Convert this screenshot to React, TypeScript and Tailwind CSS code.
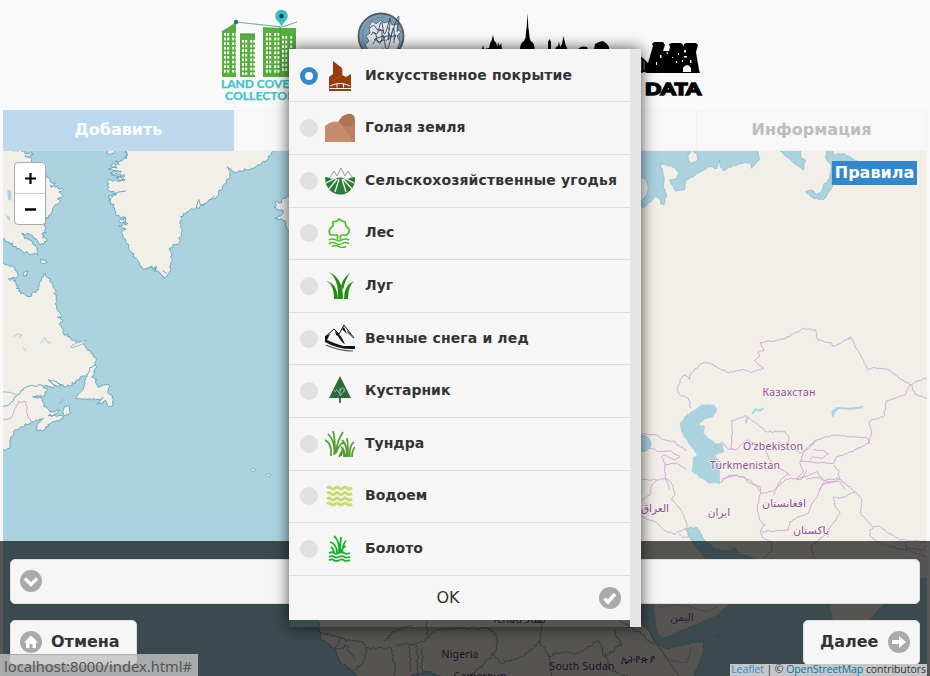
import React from 'react';

type Pt = [number, number];

const parse = (s: string): Pt[] =>
  s.trim().split(/\s+/).map((p) => p.split(',').map(Number) as Pt);

/** Builds a path through the points, roughening each segment by a repeatable amount. */
function rough(s: string, amount = 5, closed = true): string {
  const pts = parse(s);
  let seed = pts.length * 7919 + Math.abs(pts[0][0]) * 31;
  const rnd = () => {
    seed = (seed * 1103515245 + 12345) % 2147483648;
    return seed / 2147483648 - 0.5;
  };
  const out: string[] = [];
  const n = closed ? pts.length : pts.length - 1;
  for (let i = 0; i < n; i++) {
    const [x1, y1] = pts[i];
    const [x2, y2] = pts[(i + 1) % pts.length];
    out.push(`${x1},${y1}`);
    const len = Math.hypot(x2 - x1, y2 - y1);
    const k = Math.min(14, Math.floor(len / 5));
    for (let j = 1; j < k; j++) {
      const t = j / k;
      const d = rnd() * amount * 2;
      out.push(
        `${(x1 + (x2 - x1) * t - ((y2 - y1) / len) * d).toFixed(1)},${(y1 + (y2 - y1) * t + ((x2 - x1) / len) * d).toFixed(1)}`,
      );
    }
  }
  if (!closed) out.push(pts[pts.length - 1].join(','));
  return 'M' + out.join('L') + (closed ? 'Z' : '');
}

const northWest = [
  '-30,140 60,150 75,160 98,158 100,165 75,168 95,178 100,188 138,225 150,245 165,248 150,258 190,268 178,275 190,288 172,296 182,302 165,315 152,345 138,352 132,375 138,400 125,402 140,425 120,435 95,405 65,400 85,420 105,435 115,465 85,460 60,450 10,415 -30,400',
  '-30,485 10,490 45,502 52,520 48,535 25,537 48,540 48,555 62,582 90,590 110,572 120,545 135,520 150,545 162,565 172,605 165,612 185,645 172,652 188,660 180,668 188,695 212,717 240,725 262,750 285,772 288,805 272,828 240,832 210,858 110,860 92,882 55,905 10,925 -30,940',
  '320,150 345,150 340,160 318,160',
  '72,518 84,515 80,528 70,528',
  '122,478 138,480 134,490 122,486',
];

const greenland =
  '375,140 380,175 366,182 345,184 358,192 330,196 350,204 325,208 365,215 330,220 375,228 350,234 375,242 325,240 322,268 335,275 350,282 325,288 330,300 345,325 350,348 378,352 355,362 383,370 355,378 378,388 362,396 378,420 392,455 415,485 430,508 450,502 470,500 462,515 480,518 490,535 508,518 518,480 508,445 535,430 545,395 542,350 570,330 600,320 650,290 670,255 690,225 682,200 700,218 760,205 800,180 835,140';

const gulf = [
  '10,350 30,340 50,318 80,290 125,285 142,300 132,318 98,320 128,328 132,350 150,365 178,360 170,370 145,378 188,378 190,385 150,402 132,420 112,422 112,402 130,385 95,395 45,420 32,448 28,475 10,480 -30,480 -30,350',
  '285,225 270,232 252,290 228,325 290,328 310,322 290,342 318,332 325,350 338,347 338,318 325,310 328,285 310,285 295,292 288,280 290,268 275,262 290,230',
  '145,270 160,270 185,288 165,285',
  '190,375 192,355 205,345 208,358 214,368 205,376',
];

const arctic = [
  '0,140 350,140 358,180 345,190 335,205 328,188 300,190 262,205 250,212 240,200 238,180 230,205 208,200 150,235 135,245 133,270 105,272 88,240 112,235 115,215 95,198 62,192 72,230 70,262 80,285 72,315 62,312 60,295 45,290 15,320 0,325',
  '418,150 482,152 482,170 497,182 488,210 470,195 440,170',
  '558,150 580,150 578,165 610,160 650,182 640,190 578,186 575,240 578,260 552,298 520,295 497,275 515,270 530,283 545,275 550,255 570,235 575,200 558,175',
];

const borders = [
  '152,355 145,325 120,315 112,295 125,262 135,255 148,268 152,250 185,220 210,220 265,248 310,238 332,248 370,235 343,212 358,200 355,185 372,180 360,158 430,148 490,115 528,120 532,150 575,158 580,170 632,142 685,240 700,232 750,240 765,255 810,285',
  '625,150 632,140',
  '810,285 795,315 740,332 732,378 688,395 695,425 685,460 635,485 590,500 580,520 482,515 490,490 530,452',
  '810,285 870,258', '815,285 825,312 870,328',
  '245,455 265,478 290,478 320,450 370,470 395,520 450,555',
  '275,478 275,392 320,378 380,425 435,425 446,440 445,465 480,490 530,450 580,435 680,443 690,460',
  '520,480 550,480 565,492 545,505 520,500 510,510', '480,515 490,545 470,565 500,560 530,545 550,572 598,565 595,540 580,525',
  '5,430 50,435 65,448 100,453 120,470 140,480', '5,465 60,485 90,482 120,500 105,510 75,495 65,500 75,525 110,520 140,540',
  '75,525 75,560 90,600',
  '245,565 290,555 330,570 362,602', '400,615 415,580 445,550', '540,600 550,578 600,575 615,600',
];

const southBorders = [
  '5,28 50,30 75,25 92,35 100,50 105,70 95,90 120,115 138,155 140,172',
  '5,90 30,75 35,45 50,30', '5,140 45,155 75,182 105,192 130,178 150,175', '118,190 128,203 150,200',
  '238,40 270,15 310,20 325,38 360,50 362,70 352,110 358,150 375,165 360,182 370,205 395,215 397,240 370,265',
  '362,70 395,65 420,45 435,30 455,25 485,28 500,0', '500,28 530,22 570,38 545,45 530,85 515,100 505,130 480,140 450,155 445,180 365,185',
  '570,38 600,28 645,65 665,85 662,130 700,172 690,180 690,200 730,225 800,240 860,260',
  '645,65 600,85 580,82 585,110 600,130 580,160 560,190 512,230 525,265',
  '700,172 715,168 780,210 860,215', '795,215 800,235 850,240 860,225',
];

function WorldMap() {
  return (
    <svg className="block h-[525px] w-[924px]" viewBox="3 151 924 525">
      <rect x="3" y="151" width="924" height="525" fill="#aad3df" />
      <g strokeLinejoin="round" strokeWidth="3">
        <g transform="translate(0 100) scale(.33333)" fill="#f2efe9" stroke="#6ba7be">
          {northWest.map((p) => <path key={p} d={rough(p, 5)} />)}
          <path d={rough(greenland, 4.5)} />
          <path d="M325 305l25-28 28-4M333 225l25 5 18 10M588 325l8-27 5 16 16-2M630 300l14-12M378 150l4 15-6 12M368 348l10 8-4 14 8 6M440 508l12-8 8 10 8-6M488 512l12 8" fill="none" />
          <path d={rough('880,280 850,295 845,308 830,303 822,322 850,332 845,345 825,355 855,362 860,385 880,400', 4)} />
          <path d="M22 270l12 2v30l-10-3zM15 345l15 5-2 14z" fill="#aad3df" stroke="none" />
        </g>
        <g transform="translate(0 290) scale(.33333)" fill="#f2efe9" stroke="#6ba7be">
          {gulf.map((p) => <path key={p} d={rough(p, 3.5)} />)}
          <path d="M212 170l14-10 34-10-12 12-32 12zM750 538l14-2 2 6-10 2zM797 554l12-2 4 5-10 3zM0 305l30 2 20 8M178 338l10-10-2 10z" strokeWidth="2" />
          <path d="M40 140q12-12 25-5l-8 10M122 160l12-18 6 12 12 4-10 2M70 172l8 12" fill="none" stroke="#bfd9df" strokeWidth="4" />
          <path d={rough('5,392 35,382 55,335 78,335 82,375 95,398', 2, false)} fill="none" stroke="#cba6cf" />
        </g>
        <path d="M600 151H927V676H600Z" fill="#f2efe9" />
        <g transform="translate(640 100) scale(.33333)" fill="#aad3df" stroke="#83b3c5" strokeWidth="2">
          {arctic.map((p) => <path key={p} d={rough(p, 2)} />)}
          <path d={rough('145,165 155,150 172,165 172,182 155,190 144,180', 2)} fill="#f2efe9" />
          <path d="M0 232q22 0 24 28t-24 45z" fill="#f2efe9" />
        </g>
        <g transform="translate(640 290) scale(.33333)" fill="none" stroke="#cba6cf" strokeWidth="2.8">
          {borders.map((p) => <path key={p} d={rough(p, 2, false)} />)}
          <path d={rough('185,343 222,343 232,360 222,380 195,388 178,405 195,408 190,430 215,450 225,460 245,458 253,485 225,495 240,515 240,580 205,580 155,545 158,505 170,495 150,465 130,440 118,402 135,378', 2)} fill="#aad3df" stroke="none" />
          <path d="M0 435q30 0 33 30-8 22-33 20z" fill="#aad3df" stroke="#83b3c5" strokeWidth="2" />
          <path d="M574 365q6-6 18-14l40 2 38-5-2 7-36 4-36-2-12 12-3 16q-8-8-7-20z" fill="#aad3df" stroke="none" />
          <path d="M336 372l10-14 14 4 10-8M318 400l4-20" stroke="#aad3df" strokeWidth="6" />
        </g>
        <g transform="translate(640 470) scale(.33333)" fill="#aad3df" stroke="#cba6cf" strokeWidth="2.8">
          <g fill="none">{southBorders.map((p) => <path key={p} d={rough(p, 2, false)} />)}</g>
          <g stroke="#83b3c5" strokeWidth="1.8">
            <path d={rough('138,175 172,173 192,210 225,235 265,245 285,232 295,250 345,268 440,268 440,330 180,330 210,280 180,245 150,205', 2)} />
            <path d={rough('-130,240 0,390 40,405 52,495 72,505 130,480 235,435 270,400 565,380 570,430 595,480 620,500 660,480 690,450 740,395 790,380 845,325 870,330 870,625 158,625 190,545 190,512 80,536 50,522 0,440 -130,320', 2)} />
          </g>
          <path d="M228 497h18v4h-18z" fill="#d8d8d0" />
          <path d={rough('50,535 90,570 140,580 155,530', 2, false)} fill="none" />
          <path d={rough('55,410 110,405 150,410 200,425 235,410', 2, false)} fill="none" />
        </g>
        <g transform="translate(285 560) scale(.33333)" fill="#f2efe9" stroke="#8d8990" strokeWidth="2.4">
          <path d={rough('95,100 100,180 105,232 150,270 160,300 205,335 225,370 360,370 380,345 430,335 475,350 490,380 1200,380 1065,175 1065,100', 3)} />
          <g fill="none">
            {['100,215 165,232 180,240 230,245 245,265 320,265 330,320 325,365', '245,265 235,310 205,330', '165,235 150,270 185,258 210,300', '335,255 395,250 420,240 432,232 450,210 530,205 610,205 635,225 635,265 620,290 555,348', '395,255 400,348', '372,258 378,335', '412,265 412,340', '300,245 320,220 350,205 385,195', '425,180 430,228', '620,280 650,310 715,290 765,245 790,290 830,275 880,280 940,240 960,290 1010,250 985,210', '770,190 765,250', '795,290 800,370', '960,280 975,330 1030,350', '1000,180 1060,215 1110,255'].map((p) => <path key={p} d={rough(p, 4, false)} />)}
          </g>
        </g>
      </g>
      <g className="font-['Noto_Sans','Open_Sans','DejaVu_Sans',sans-serif]" fontSize="10.5" fill="#865094" textAnchor="middle" stroke="#f7f4ef" strokeWidth="1.6" paintOrder="stroke" strokeLinejoin="round">
        <text x="789" y="396" textLength="53">Казахстан</text>
        <text x="773" y="449.5" textLength="60">Oʻzbekiston</text>
        <text x="745" y="468.5" textLength="70">Türkmenistan</text>
        <text x="784" y="507" textLength="44" lengthAdjust="spacingAndGlyphs">افغانستان</text>
        <text x="719" y="516">ایران</text>
        <text x="655" y="512">العراق</text>
        <text x="811" y="534" textLength="36" lengthAdjust="spacingAndGlyphs">پاکستان</text>
        <text x="682" y="621">اليمن</text>
        <g stroke="none" fill="#65306f">
          <text x="460" y="657.5" textLength="37">Nigeria</text>
          <text x="582" y="670" textLength="65">South Sudan</text>
          <text x="480" y="680" textLength="53">Cameroun</text>
          <text x="519" y="623" textLength="54">Tchad تشاد</text>
          <text x="638" y="663" textLength="34" lengthAdjust="spacingAndGlyphs">ኢትዮጵያ</text>
        </g>
      </g>
    </svg>
  );
}

function BuildingsLogo() {
  const windows = (x: number, y: number, cols: number, rows: number, key: string) =>
    Array.from({ length: cols * rows }, (_, i) => (
      <rect key={key + i} x={x + (i % cols) * 3.2 + (Math.floor((i % cols) / 2)) * 1.8} y={y + Math.floor(i / cols) * 4.6} width="2" height="2.8" fill="#f4faef" />
    ));
  return (
    <svg className="h-[110px] w-[90px]" viewBox="215 0 90 110">
      <path d="M222 31l14-8v54h-14zM240 34h15v43h-15zM263 27l17 1h16v49h-33z" fill="#57ad3d" />
      <path d="M240 34h15M280 27v50" stroke="#438f2e" />
      {windows(224, 33, 4, 9, 'a')}
      {windows(242, 40, 4, 8, 'b')}
      {windows(266, 33, 4, 9, 'c')}
      {windows(282, 36, 3, 8, 'd')}
      <path d="M222 33l14-11 46 5 15-5" fill="none" stroke="#4b8e91" strokeWidth=".8" />
      <circle cx="236" cy="22" r="2.2" fill="#23707a" />
      <path d="M281.500 27c-1-5-6.200-6-6.200-11a6.200 6.200 0 0 1 12.400 0c0 5-5.200 6-6.200 11z" fill="#33bfc5" />
      <circle cx="281.500" cy="16" r="2.200" fill="#163b48" />
      <g className="font-['Lato',sans-serif] font-bold" fontSize="11" fill="#39c5ca" stroke="#39c5ca" strokeWidth=".25">
        <text x="221" y="88" textLength="76" lengthAdjust="spacingAndGlyphs">LAND COVER</text>
        <text x="225" y="99.500" textLength="70" lengthAdjust="spacingAndGlyphs">COLLECTOR</text>
      </g>
    </svg>
  );
}

function MedalLogo() {
  return (
    <svg className="ml-[50px] h-[110px] w-[52px]" viewBox="355 0 52 110">
      <circle cx="381" cy="36" r="22.500" fill="#7e9db8" stroke="#525d68" strokeWidth="1.800" />
      <circle cx="381" cy="36" r="18.500" fill="none" stroke="#6787a3" />
      <path d="M369 27l3-6 4 3 5-4 3 3 6-2 2 4 6-1-1 5 4 3-4 4 3 6-3 8-8 1-6-2-8 4-6-2-4-6 4-4-3-5 4-3z" fill="#dfe4e8" stroke="#455b6d" strokeWidth=".8" />
      <path d="M370 28q4-5 6 0t4-3 3 4 5-4 1 5 5-3 3 5M371 35q3-5 5 0t-1 5 5-3 2 4M378 31q5-2 4 3t5 2-1 5M373 44q2-6 5-2t4-4 3 6 6-7 3 6M388 32l3 5 5-2-2 5M372 32l5 2 2-5 5 2M375 38l4 4 5-2M387 27l3 3" fill="none" stroke="#35485a" strokeWidth=".9" />
    </svg>
  );
}

function SkylineLogo() {
  return (
    <svg className="ml-[63px] h-[110px] w-[240px]" viewBox="470 0 240 110">
      <path d="M482 49l1-4 1 4 5-1 1.500-6 1-1 1.500-6 1.300 6 2 2 1 4 1-5 1 4 2-3 .5 6zM520 50q0-7 4-9l1.500-3 .5-6 .7-5 .8-14 .8 14 .7 5 .7 6 1 3q4 2 4 9zM548 50v-8l1.500-3 1.500 3v8zM555 50l1-3 2-1 1-4 1.200 5 1.800-3 1.500-8 1.800 8 2.500 6zM577 50q4-5 10-3l1 3zM594 50l1-6 4-2 4-1 4 3 2 3v3z" />
      <path d="M639 74V55l5 4 4 4 5-17-1-2 2-2 9 0 2 3-2 6h6l1-4-1-3 3-1 9 0 2 2v2l1-3 2-1 10 0 2 2-2 7 3 18 1 3H647l-3-1z" />
      <path d="M683 72v-4q4-6 8 0v4zM660 55h1.500v3H660zM656 62h1v3h-1zM678 53h1v2h-1zM684 50h2v2.500h-2zM690 60h1.500v3H690zM676 61h1v2h-1zM682 60h1v2h-1zM666 53l2-1v2zM672 57h1v1h-1zM684 56h3v1.500h-3z" fill="#f9f9f9" />
      <path d="M641 59v12M644 61v9" stroke="#f9f9f9" strokeWidth=".6" />
      <text x="645" y="94.600" textLength="56" lengthAdjust="spacingAndGlyphs" fontSize="16.500" stroke="#000" strokeWidth="1.400" className="font-['Lato',sans-serif] font-black">DATA</text>
    </svg>
  );
}

const icons: Record<string, React.ReactNode> = {
  city: (
    <g>
      <path d="M4 30V16l4-3V0l9 7v7l4 2 5-3v17z" fill="#943f0b" />
      <path d="M9 19l8-5M17 8v6" stroke="#a85a2a" strokeWidth=".8" />
      <path d="M5 25q10-5 20 0M4.500 27.500h22M12 22.500v4M18.500 22.500v4" fill="none" stroke="#f6f6f6" strokeWidth="1" />
    </g>
  ),
  bare: (
    <g>
      <path d="M12 11q6-12 14-10 4 1 4 6v22H12z" fill="#ad7455" />
      <path d="M0 13q7-6 13-4 5 1 12 14l2 6H0z" fill="#c58b6d" />
      <path d="M16 13q5-1 8 1 4-1 6-4v19h-4q-1-9-10-16z" fill="#bb8060" />
    </g>
  ),
  farm: (
    <g>
      <path d="M5 11l4-6 3 5 4-8 4 8 3-5 4 6" fill="none" stroke="#708f70" strokeWidth=".8" />
      <path d="M0 11q4 0 7 2 8-3 16 0 3-2 7-2c1 11-7 17.500-15 17.500S0 22 0 11z" fill="#2b7c38" />
      <path d="M11 12L1 17M12 13L4 23M14 13l-4 13M17 13l4 13M18 13l9 10M19 12l10 5" stroke="#f6f6f6" strokeWidth="1.300" />
    </g>
  ),
  forest: (
    <g fill="none" stroke="#4bbf20" strokeWidth="1.700">
      <path d="M13 17H6q-3-2-1-6 1-2 3-3l0-4 4-1 2-2 3 2 3 1 1 4q4 3 3 6l-2 3h-6M12.500 17v5M15.500 17v5" />
      <path d="M4 22q4-2 7 0t6 0 7 0M4 25.500q4-2 7 0t6 0 7 0M7 28.500q4-2 7 0t7 0" strokeWidth="1.500" />
    </g>
  ),
  meadow: (
    <g fill="#258b12">
      <path d="M1 10q8 3 8 18h4Q12 12 1 10zM4 1q10 7 9 27h5Q18 7 4 1zM29 10q-10 4-10 18h4q0-13 6-18zM25 2q-7 5-9 13l2 4q2-10 7-17z" />
    </g>
  ),
  snow: (
    <g>
      <path d="M0 13l9-8 5 5 5-9 10 13" fill="none" stroke="#111" strokeWidth="1" />
      <path d="M0 12l5-2-3 6 7 3 9 3 12 0v3q-16 1-30-7zM10 7l4 3 3 4 3 6-2-1-4-5-1-2-2-1zM19 3l3 7-5-5zM22 6l7 9-6-6z" fill="#111" />
      <path d="M1 21q13 6 27 6" fill="none" stroke="#555" strokeWidth="1.200" />
    </g>
  ),
  shrub: (
    <g>
      <path d="M15 0L26 22H4z" fill="#296c3b" />
      <path d="M15 26V12M15 18l-4-5M15 20l5-6M11 16l-2-2M19 16v-4M15 15l3-4" stroke="#a1bc9f" strokeWidth="1" />
      <path d="M14.300 20h1.400v7h-1.400z" fill="#333" />
    </g>
  ),
  tundra: (
    <g fill="none" stroke="#529d30" strokeWidth="1.700">
      <path d="M6 27Q7 14 0 11M9 26Q11 13 3 5M10 25Q10 8 8 2M11 22Q13 10 18 3M11 24q3-9 8-11M14 28l4-8 3 8M22 28q0-13-5-17M23 28q0-12-1-19M25 28q-1-12 4-15M27 28q0-7 3-10M16 27q1-5 4-5M19 28q0-8-3-10" />
    </g>
  ),
  water: (
    <g fill="none" stroke="#c6dd72" strokeWidth="3">
      {[7, 12.500, 18, 23].map((y) => <path key={y} d={`M2 ${y}q2-2.200 4 0t4 0 4 0 4 0 4 0 5 0`} />)}
    </g>
  ),
  swamp: (
    <g fill="none" stroke="#19b02a" strokeWidth="1.800">
      <path d="M5 8q7 2 7 11M9 2q6 5 5 17M15 19q0-9 1-16M17 19q1-10 4-12M16 18q2-5 5-6M9 18q-1-4-3-5" />
      <path d="M4 19q3-1.500 5 0t5 0 5 0 6 0M4 22.800q3-1.500 5 0t5 0 5 0 6 0M4 26.200q3-1.500 5 0t5 0 5 0 6 0" />
    </g>
  ),
};

const options = [
  ['city', 'Искусственное покрытие'],
  ['bare', 'Голая земля'],
  ['farm', 'Сельскохозяйственные угодья'],
  ['forest', 'Лес'],
  ['meadow', 'Луг'],
  ['snow', 'Вечные снега и лед'],
  ['shrub', 'Кустарник'],
  ['tundra', 'Тундра'],
  ['water', 'Водоем'],
  ['swamp', 'Болото'],
];

function RoundIcon({ children }: { children: React.ReactNode }) {
  return (
    <svg className="size-[22px] shrink-0" viewBox="0 0 22 22">
      <circle cx="11" cy="11" r="11" fill="#aaaaaa" />
      {children}
    </svg>
  );
}

function CoverDialog() {
  return (
    <div className="absolute top-[49px] left-[289px] flex h-[578px] w-[352px] shadow-[0_0_14px_rgba(0,0,0,0.7)]">
      <div className="h-[571px] w-[341px] shrink-0 bg-[#f6f6f6] pt-[0.9px]">
        {options.map(([icon, label], i) => (
          <div key={icon} className="flex h-[52.600px] items-center border-b border-[#dddddd] pl-[11px]">
            {i === 0 ? (
              <span className="size-[18px] rounded-full border-[5.500px] border-[#3388cc] bg-white" />
            ) : (
              <span className="size-[18px] rounded-full bg-[#e0e0e0]" />
            )}
            <svg className="ml-[7px] size-[30px]" viewBox="0 0 30 30">{icons[icon]}</svg>
            <span className={`ml-[10px] pb-[2px] text-[14px] leading-[18px] font-bold whitespace-nowrap text-[#333] ${label.length > 16 ? 'tracking-[0.14px]' : ''}`}>{label}</span>
          </div>
        ))}
        <div className="flex h-[44px] items-center pr-[9px] pl-[8px]">
          <span className="flex-1 text-center text-base text-[#333]">OK</span>
          <RoundIcon>
            <path d="M5.500 11.500l3.500 3.500 7-8" fill="none" stroke="#fff" strokeWidth="3.600" />
          </RoundIcon>
        </div>
      </div>
      <div className="w-[11px] bg-[#e6e6e6]" />
    </div>
  );
}

export default function App() {
  return (
    <div className="relative h-[676px] w-[930px] overflow-hidden bg-[#f9f9f9] font-['DejaVu_Sans',sans-serif]">
      <header className="flex h-[110px] pl-[215px]">
        <BuildingsLogo />
        <MedalLogo />
        <SkylineLogo />
      </header>
      <nav className="mx-[3px] grid h-[41px] grid-cols-4 bg-[#f8f8f8] text-base font-bold text-[#bdbdbd]">
        <div className="flex items-center justify-center border-b border-[#c8d7e3] bg-[#bdd7ec] pb-[1px] text-white">Добавить</div>
        <div className="border-y border-l border-[#f2f2f2]" />
        <div className="border-y border-[#f2f2f2]" />
        <div className="flex items-center justify-center border border-[#f2f2f2] pb-[2px]">Информация</div>
      </nav>
      <main className="relative mx-[3px] h-[525px]">
        <WorldMap />
        <div className="absolute top-[11px] left-[11px] flex h-[63px] w-[32px] flex-col overflow-hidden rounded-[4px] border border-[#aaaaaa] bg-white text-[#000]">
          <button className="flex h-[31px] items-center justify-center border-b border-[#ccc]">
            <svg className="size-[13px]" viewBox="0 0 13 13"><path d="M1 6.500h11M6.500 1v11" stroke="#000" strokeWidth="2.200" /></svg>
          </button>
          <button className="flex h-[30px] items-center justify-center">
            <svg className="size-[13px]" viewBox="0 0 13 13"><path d="M1 6.500h11" stroke="#000" strokeWidth="2.400" /></svg>
          </button>
        </div>
        <div className="absolute top-[10px] right-[10px] h-[24px] w-[85px] bg-[#3388cc] text-center text-base leading-[23px] font-bold text-white">Правила</div>
      </main>
      <section className="absolute inset-x-0 top-[541px] h-[135px] bg-black/65 px-[10px] pt-[18px]">
        <div className="flex h-[45px] items-center rounded-[5px] border border-[#ddd] bg-[#f6f6f6] pb-[2px] pl-[9px]">
          <RoundIcon>
            <path d="M5 8.500l6 6 6-6" fill="none" stroke="#fff" strokeWidth="3.200" />
          </RoundIcon>
        </div>
        <div className="mt-[16px] flex justify-between text-base font-bold text-[#333]">
          <button className="flex h-[45px] w-[127px] items-center rounded-[5px] border border-[#ddd] bg-[#f6f6f6] pb-[2px] pl-[9px]">
            <RoundIcon>
              <path d="M11 4.500L4 11.500h2V17h3.500v-4h3v4H16v-5.500h2z" fill="#fff" />
            </RoundIcon>
            <span className="ml-[9px]">Отмена</span>
          </button>
          <button className="flex h-[45px] w-[117px] items-center justify-between rounded-[5px] border border-[#ddd] bg-[#f6f6f6] pr-[9px] pb-[2px] pl-[16px]">
            <span>Далее</span>
            <RoundIcon>
              <path d="M4 9v4h7v4l7-6-7-6v4z" fill="#fff" />
            </RoundIcon>
          </button>
        </div>
      </section>
      <div className="absolute right-[3px] bottom-0 flex h-[12px] w-[197px] items-center justify-center overflow-hidden bg-[#c4c6c7] font-['Open_Sans',sans-serif] text-[10.400px] tracking-[-0.010px] whitespace-pre text-[#333]">
        <span className="text-[#3388cc]">Leaflet</span> | © <span className="text-[#0078a8]">OpenStreetMap</span> contributors
      </div>
      <div className="absolute bottom-0 left-0 h-[22px] w-[198px] border-t border-r border-[#aaa] bg-[#c3c3c3]/80 pl-[4px] font-['Noto_Sans',sans-serif] text-[14.700px] leading-[22px] text-[#555]">localhost:8000/index.html#</div>
      <CoverDialog />
    </div>
  );
}
